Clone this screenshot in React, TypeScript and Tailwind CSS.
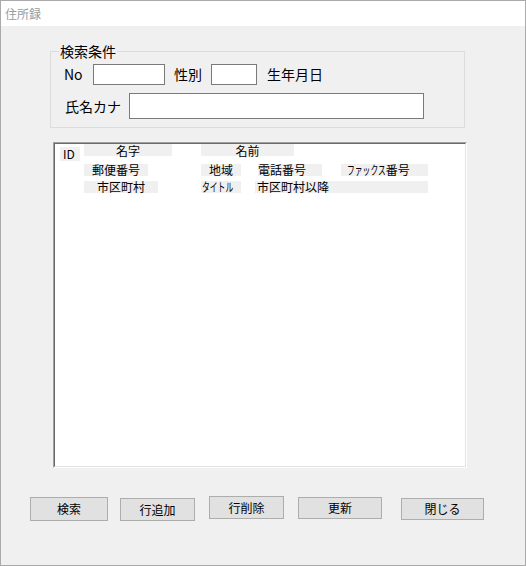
import React from "react";

const font = "font-['Noto_Sans_CJK_JP','Liberation_Sans',sans-serif]";

function Cell({ className, children }: { className: string; children?: React.ReactNode }) {
  return (
    <div className={`h-[12px] bg-[#f0f0f0] text-[12px] leading-[12px] text-black whitespace-nowrap ${className}`}>
      {children}
    </div>
  );
}

function Btn({ className, label }: { className: string; label: string }) {
  return (
    <button className={`bg-[#e1e1e1] border border-[#adadad] text-[12px] leading-none text-black flex items-center justify-center ${className}`}>
      {label}
    </button>
  );
}

export default function App() {
  return (
    <div className={`w-[526px] h-[566px] border border-[#aaaaaa] bg-[#f0f0f0] flex flex-col ${font}`}>
      {/* Title bar */}
      <div className="h-[25px] bg-white flex items-center pl-[4px] text-[12px] text-[#9a9a9a]">住所録</div>

      {/* Search conditions */}
      <fieldset className="ml-[49px] mt-[17px] w-[415px] border border-[#dcdcdc] px-0 pb-[8px]">
        <legend className="ml-[8px] px-[1px] text-[14px] leading-[16px] text-black">検索条件</legend>
        <div className="flex items-center mt-[5px] text-[14px] text-black">
          <span className="ml-[13px] w-[29px]">No</span>
          <div className="w-[72px] h-[21px] bg-white border border-[#7a7a7a]" />
          <span className="ml-[9px] w-[37px]">性別</span>
          <div className="w-[46px] h-[21px] bg-white border border-[#7a7a7a]" />
          <span className="ml-[10px]">生年月日</span>
        </div>
        <div className="flex items-center mt-[8px] text-[14px] text-black">
          <span className="ml-[14px] w-[64px]">氏名カナ</span>
          <div className="w-[295px] h-[26px] bg-white border border-[#7a7a7a]" />
        </div>
      </fieldset>

      {/* List */}
      <div className="ml-[52px] mt-[14px] w-[414px] h-[326px] border-t border-l border-t-[#a0a0a0] border-l-[#a0a0a0] border-r border-b border-r-white border-b-white">
        <div className="w-full h-full bg-white border-t border-l border-t-[#696969] border-l-[#696969] border-r border-b border-r-[#e3e3e3] border-b-[#e3e3e3]">
          <div className="flex items-start h-[17px]">
            <Cell className="ml-[5px] mt-[3px] w-[20px] h-[14px] pl-[3px] pt-[1px]">ID</Cell>
            <Cell className="ml-[4px] w-[88px] text-center pt-[1px] leading-[11px]">名字</Cell>
            <Cell className="ml-[29px] w-[93px] text-center pt-[1px] leading-[11px]">名前</Cell>
          </div>
          <div className="flex items-start mt-[3px]">
            <Cell className="ml-[29px] w-[64px] text-center">郵便番号</Cell>
            <Cell className="ml-[53px] w-[40px] text-center">地域</Cell>
            <Cell className="ml-[17px] w-[64px]">電話番号</Cell>
            <Cell className="ml-[19px] w-[87px] pl-[6px]">
              <span className="inline-block origin-left scale-x-[0.65] mr-[-21px]">ファックス</span>番号
            </Cell>
          </div>
          <div className="flex items-start mt-[5px]">
            <Cell className="ml-[29px] w-[74px] text-center">市区町村</Cell>
            <Cell className="ml-[43px] w-[40px] pl-[1px]">
              <span className="inline-block origin-left scale-x-[0.65] mr-[-17px]">タイトル</span>
            </Cell>
            <Cell className="ml-[14px] w-[173px] pl-[2px]">市区町村以降</Cell>
          </div>
        </div>
      </div>

      {/* Buttons */}
      <div className="flex items-start mt-[28px]">
        <Btn className="ml-[29px] mt-[1px] w-[78px] h-[24px]" label="検索" />
        <Btn className="ml-[12px] mt-[2px] w-[75px] h-[23px]" label="行追加" />
        <Btn className="ml-[14px] w-[75px] h-[23px]" label="行削除" />
        <Btn className="ml-[14px] mt-[1px] w-[84px] h-[22px]" label="更新" />
        <Btn className="ml-[19px] mt-[2px] w-[83px] h-[22px]" label="閉じる" />
      </div>
    </div>
  );
}
